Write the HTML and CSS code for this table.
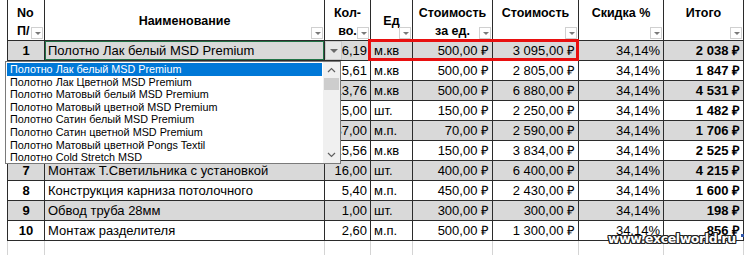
FILE: index.html
```html
<!DOCTYPE html>
<html>
<head>
    <title>Смета</title>
    <link rel="stylesheet" href="styles.css">
</head>
<body>
<div class="sheet">
    <table class="grid">
        <colgroup>
            <col class="c-no"><col class="c-name"><col class="c-qty"><col class="c-unit">
            <col class="c-price"><col class="c-cost"><col class="c-disc"><col class="c-total">
        </colgroup>
        <tr class="head">
            <th class="mid">No<br>П/<span class="filter"></span></th>
            <th class="mid one">Наименование<span class="filter"></span></th>
            <th class="mid">Кол-<br>во.<span class="filter"></span></th>
            <th class="mid one">Ед<span class="filter"></span></th>
            <th class="mid">Стоимость<br>за ед.<span class="filter"></span></th>
            <th class="top">Стоимость<span class="filter"></span></th>
            <th class="top">Скидка %<span class="filter"></span></th>
            <th class="top">Итого<span class="filter"></span></th>
        </tr>
        <tr class="odd">
            <td class="no">1</td><td class="name selected">Полотно Лак белый MSD Premium</td>
            <td class="num">6,19</td><td>м.кв</td><td class="num">500,00 ₽</td><td class="num">3 095,00 ₽</td><td class="num">34,14%</td><td class="num b">2 038 ₽</td>
        </tr>
        <!-- names of rows 2-6 are hidden under the open list -->
        <tr>
            <td class="no">2</td><td class="name"></td>
            <td class="num">5,61</td><td>м.кв</td><td class="num">500,00 ₽</td><td class="num">2 805,00 ₽</td><td class="num">34,14%</td><td class="num b">1 847 ₽</td>
        </tr>
        <tr class="odd">
            <td class="no">3</td><td class="name"></td>
            <td class="num">13,76</td><td>м.кв</td><td class="num">500,00 ₽</td><td class="num">6 880,00 ₽</td><td class="num">34,14%</td><td class="num b">4 531 ₽</td>
        </tr>
        <tr>
            <td class="no">4</td><td class="name"></td>
            <td class="num">15,00</td><td>шт.</td><td class="num">150,00 ₽</td><td class="num">2 250,00 ₽</td><td class="num">34,14%</td><td class="num b">1 482 ₽</td>
        </tr>
        <tr class="odd">
            <td class="no">5</td><td class="name"></td>
            <td class="num">37,00</td><td>м.п.</td><td class="num">70,00 ₽</td><td class="num">2 590,00 ₽</td><td class="num">34,14%</td><td class="num b">1 706 ₽</td>
        </tr>
        <tr>
            <td class="no">6</td><td class="name"></td>
            <td class="num">25,56</td><td>м.кв</td><td class="num">150,00 ₽</td><td class="num">3 834,00 ₽</td><td class="num">34,14%</td><td class="num b">2 525 ₽</td>
        </tr>
        <tr class="odd">
            <td class="no">7</td><td class="name">Монтаж Т.Светильника с установкой</td>
            <td class="num">16,00</td><td>шт.</td><td class="num">400,00 ₽</td><td class="num">6 400,00 ₽</td><td class="num">34,14%</td><td class="num b">4 215 ₽</td>
        </tr>
        <tr>
            <td class="no">8</td><td class="name">Конструкция карниза потолочного</td>
            <td class="num">5,40</td><td>м.п.</td><td class="num">450,00 ₽</td><td class="num">2 430,00 ₽</td><td class="num">34,14%</td><td class="num b">1 600 ₽</td>
        </tr>
        <tr class="odd">
            <td class="no">9</td><td class="name">Обвод труба 28мм</td>
            <td class="num">1,00</td><td>шт.</td><td class="num">300,00 ₽</td><td class="num">300,00 ₽</td><td class="num">34,14%</td><td class="num b">198 ₽</td>
        </tr>
        <tr>
            <td class="no">10</td><td class="name">Монтаж разделителя</td>
            <td class="num">2,60</td><td>м.п.</td><td class="num">500,00 ₽</td><td class="num">1 300,00 ₽</td><td class="num">34,14%</td><td class="num b">856 ₽</td>
        </tr>
        <tr class="empty">
            <td></td><td></td><td></td><td></td><td></td><td></td><td></td><td></td>
        </tr>
    </table>

    <!-- in-cell dropdown of row 1 -->
    <span class="cell-btn"></span>
    <div class="mark"></div>

    <ul class="dropdown">
        <li class="active">Полотно Лак белый MSD Premium</li>
        <li>Полотно Лак Цветной MSD Premium</li>
        <li>Полотно Матовый белый MSD Premium</li>
        <li>Полотно Матовый цветной MSD Premium</li>
        <li>Полотно Сатин белый MSD Premium</li>
        <li>Полотно Сатин цветной MSD Premium</li>
        <li>Полотно Матовый цветной Pongs Textil</li>
        <li>Полотно Cold Stretch MSD</li>
    </ul>
    <div class="scroll">
        <svg class="arr-up" width="9" height="6" viewBox="0 0 9 6"><path d="M1 5 L4.5 1.5 L8 5" fill="none" stroke="#606060" stroke-width="1.2"/></svg>
        <div class="thumb"></div>
        <svg class="arr-down" width="9" height="6" viewBox="0 0 9 6"><path d="M1 1 L4.5 4.5 L8 1" fill="none" stroke="#606060" stroke-width="1.2"/></svg>
    </div>

    <div class="watermark">www.excelworld.ru</div>
    <span class="corner"></span>
</div>
</body>
</html>
```

FILE: styles.css
```css
body { margin: 0; background: #fff; }
.sheet { position: relative; width: 750px; height: 255px; overflow: hidden; font-family: "Liberation Sans", Arial, sans-serif; }

.grid { table-layout: fixed; border-collapse: collapse; width: 736px; margin: -1px 0 0 7px; font-size: 13px; color: #000; }
.c-no { width: 37px; }
.c-name { width: 280px; }
.c-qty { width: 46px; }
.c-unit { width: 42px; }
.c-price { width: 80px; }
.c-cost { width: 86px; }
.c-disc { width: 85px; }
.c-total { width: 80px; }

.grid th, .grid td { border: 1px solid #2b2b2b; padding: 0 3px; white-space: nowrap; overflow: hidden; }
.grid tr { height: 20px; }
.grid tr.head { height: 41px; }
.grid th { position: relative; height: 41px; box-sizing: border-box; font-size: 12.5px; font-weight: bold; line-height: 18px; text-align: center; }
.grid th.mid { vertical-align: top; padding-top: 4px; }
.grid th.one { vertical-align: middle; padding-top: 2px; }
.grid th.top { vertical-align: top; padding-top: 4px; }
.grid th:first-child { text-align: left; padding-left: 9px; }

.filter { position: absolute; right: 1px; bottom: 1px; width: 12px; height: 12px; border: 1px solid #d0d0d0; background: #fff; box-sizing: border-box; }
.filter::after { content: ""; position: absolute; left: 3px; top: 4px; border-left: 3px solid transparent; border-right: 3px solid transparent; border-top: 3px solid #7a7a7a; }

.grid tr.odd td { background: #d9d9d9; }
.grid td { line-height: 18px; }
.grid td.no { text-align: center; font-weight: bold; }
.grid td.num { text-align: right; }
.grid td.b { font-weight: bold; }
.grid td.selected { box-shadow: inset 0 0 0 1px #217346; }
.grid tr.empty { height: 20px; }
.grid tr.empty td { border: none; border-left: 1px solid #d4d4d4; border-right: 1px solid #d4d4d4; background: #fff; }

.cell-btn { position: absolute; left: 325px; top: 41px; width: 17px; height: 19px; background: #e6e6e6; border: 1px solid #c8c8c8; box-sizing: border-box; }
.cell-btn::after { content: ""; position: absolute; left: 4px; top: 7px; border-left: 4px solid transparent; border-right: 4px solid transparent; border-top: 4px solid #6a6a6a; }

.mark { position: absolute; left: 368px; top: 39px; width: 211px; height: 22px; border: 3px solid #e81010; box-sizing: border-box; }

.dropdown { position: absolute; left: 5px; top: 61px; width: 336px; height: 103px; margin: 0; padding: 1px 18px 0 1px; list-style: none; background: #fff; border: 1px solid #7a7a7a; box-sizing: border-box; font-size: 10.8px; line-height: 12.6px; }
.dropdown li { padding-left: 3px; white-space: nowrap; }
.dropdown li.active { background: #0078d7; color: #fff; }

.scroll { position: absolute; left: 323px; top: 62px; width: 17px; height: 101px; background: #f0f0f0; }
.arr-up { position: absolute; left: 4px; top: 5px; }
.arr-down { position: absolute; left: 4px; bottom: 5px; }
.thumb { position: absolute; left: 1px; top: 16px; width: 15px; height: 12px; background: #cdcdcd; }

.watermark { position: absolute; left: 608px; top: 231px; font-family: "DejaVu Sans", Verdana, sans-serif; font-weight: bold; font-size: 12.5px; letter-spacing: -0.4px; color: #fff; text-shadow: 1px 0 0 #222, -1px 0 0 #222, 0 1px 0 #222, 0 -1px 0 #222, 1px 1px 0 #222, -1px -1px 0 #222, 1px -1px 0 #222, -1px 1px 0 #222; }
.corner { position: absolute; left: 741px; top: 234px; width: 3px; height: 3px; background: #2f55a8; }
```
